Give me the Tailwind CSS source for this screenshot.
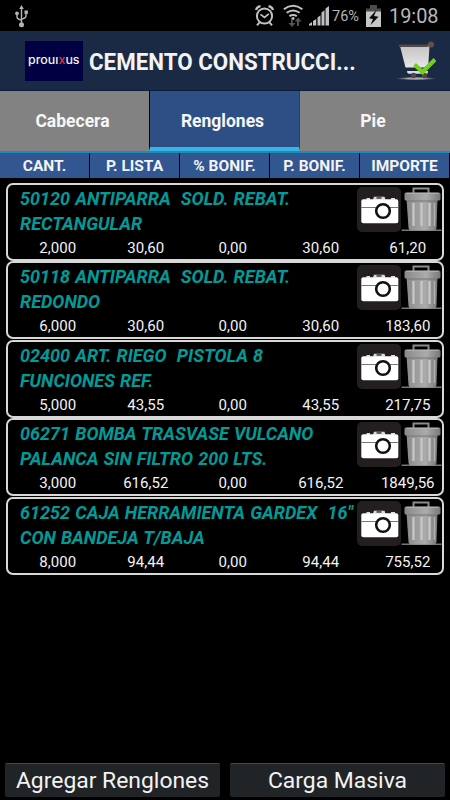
<!DOCTYPE html>
<html lang="es">
<head>
  <meta charset="UTF-8" />
  <meta name="viewport" content="width=device-width, initial-scale=1.0"/>
  <title>Prolixus - Renglones</title>
  <script src="https://cdn.jsdelivr.net/npm/@tailwindcss/browser@4"></script>
</head>
<body class="bg-black">
  <!-- shared icons -->
  <svg width="0" height="0" class="absolute">
    <defs>
      <linearGradient id="metal" x1="0" x2="1" y1="0" y2="0">
        <stop offset="0" stop-color="#898989"/><stop offset=".3" stop-color="#9b9b9b"/><stop offset=".6" stop-color="#ababab"/><stop offset="1" stop-color="#777"/>
      </linearGradient>
      <linearGradient id="cartFill" x1="0" x2="0" y1="0" y2="1">
        <stop offset="0" stop-color="#c4c4c4"/><stop offset="1" stop-color="#e6e6e6"/>
      </linearGradient>
      <linearGradient id="floor" x1="0" x2="1" y1="0" y2="0">
        <stop offset="0" stop-color="#888" stop-opacity=".2"/><stop offset=".3" stop-color="#aaa"/><stop offset=".7" stop-color="#aaa"/><stop offset="1" stop-color="#888" stop-opacity=".2"/>
      </linearGradient>
    </defs>
    <symbol id="camera" viewBox="0 0 44 45">
      <rect width="44" height="45" rx="5" fill="#231f20"/>
      <path d="M16 12.700l1-3h10.500l1 3zM9.500 11h3.500v1.700H9.500zM34 11h4v1.700h-4z" fill="#ddd"/>
      <rect x="19.500" y="10.300" width="5" height="1.300" fill="#231f20"/>
      <rect x="4.300" y="12.200" width="37" height="24" rx="2" fill="#fff"/>
      <path d="M4.300 20.500h37" stroke="#777" stroke-width="1"/>
      <circle cx="26" cy="24" r="6.800" fill="#fff" stroke="#111" stroke-width="2.600"/>
    </symbol>
    <symbol id="trash" viewBox="0 0 40 45">
      <path d="M0 42.500h40v1.500H0z" fill="#777"/>
      <path d="M12 6V1.500h15V6" fill="none" stroke="#8c8c8c" stroke-width="2"/>
      <path d="M5 12h31l-1 29q-.3 2.500-3 2.500H10q-2.700 0-3-2.500z" fill="url(#metal)"/>
      <path d="M12 16v23M20 16v23M28 16v23" stroke="#c9c9c9" stroke-width="2.200"/>
      <path d="M33 16v23" stroke="#b0b0b0" stroke-width="1.500"/>
      <rect x="3" y="5.500" width="36" height="8" rx="1.500" fill="url(#metal)"/>
      <path d="M5 6.300h32" stroke="#b5b5b5" stroke-width="1"/>
      <path d="M6 14h30" stroke="#777" stroke-width="1"/>
    </symbol>
  </svg>

  <div class="w-[450px] h-[800px] flex flex-col bg-black font-['Roboto',sans-serif] text-white overflow-hidden">

    <!-- status bar -->
    <div class="h-[31px] shrink-0 relative">
      <svg width="450" height="31" viewBox="0 0 450 31" fill="none">
        <g stroke="#b5b5b5" stroke-width="1.400">
          <path d="M21.500 7v17M17 14v3q0 1.500 1.500 2l3 1.300M26 13v3q0 1.500-1.500 2l-3 1.300"/>
          <path d="M21.500 5l-2.300 4h4.600z" fill="#b5b5b5" stroke="none"/>
          <circle cx="17" cy="13.300" r="1.900" fill="#b5b5b5" stroke="none"/>
          <path d="M24.500 10.500h3.400v3.400h-3.400z" fill="#b5b5b5" stroke="none"/>
          <circle cx="21.500" cy="24.700" r="2.500" fill="#b5b5b5" stroke="none"/>
        </g>
        <g stroke="#c2c2c2" stroke-width="2">
          <circle cx="264.500" cy="16" r="7.600"/>
          <path d="M259.500 22.300l-2.500 3M269.500 22.300l2.500 3" />
          <path d="M256 10q1-3.300 4.500-3.800M273 10q-1-3.300-4.500-3.800" stroke-width="2.200"/>
          <path d="M260.500 14.300l4 3.200 4.300-3.700" stroke-width="1.700"/>
        </g>
        <g stroke="#c2c2c2" stroke-width="2">
          <path d="M283.800 9.200q9.200-6.800 18.600 0M286.600 12.800q6.500-4.600 13 0M289.400 16.200q3.700-2.500 7.400 0"/>
          <circle cx="293" cy="18.600" r="1.500" fill="#c2c2c2" stroke="none"/>
        </g>
        <path d="M291 19v4h-2.500l3.600 4 3.400-4h-2.700v-4zM297 26v-4.500h-2.300l3.400-4 3.500 4h-2.700V26z" fill="#555"/>
        <path d="M309 25.500v-1.500l3-2v3.500zM313 25.500V21l3.200-2v6.500zM317.500 25.500v-8l3-2.300v10.300zM321.500 25.500V12.500l3-2.300v15.300zM325.500 25.500V8.500L329 6v19.500z" fill="#c0c0c0"/>
        <path d="M370 5h7v3.500h4v4h-15v-4h4z" fill="#4b4b4b"/>
        <path d="M366 11.500h15V27h-15z" fill="#c6c6c6"/>
        <path d="M376.500 10l-7.500 8.200 4 .8-2.500 6 8-8.200-4.500-.9z" fill="#080808"/>
      </svg>
      <span class="absolute left-[332px] top-[8px] text-[14.500px] leading-[18px] text-[#b4b4b4]">76%</span>
      <span class="absolute left-[389px] top-[4px] text-[20.500px] leading-[24px] text-[#b9b9b9] origin-left scale-x-[0.97]">19:08</span>
    </div>

    <!-- action bar -->
    <div class="h-[60px] shrink-0 flex items-center bg-[#1a2944] border-b border-[#0b1c3a] pl-[25px] pr-[14px]">
      <div class="w-[58px] h-[40px] bg-[#000042] flex items-center justify-center shrink-0">
        <span class="font-['Inter',sans-serif] font-medium text-[11.500px] leading-none text-gray-100 whitespace-nowrap scale-x-[1.080]">prouı<span class="text-red-500">x</span>us</span>
      </div>
      <h1 class="ml-[6px] pt-[2px] text-[24px] font-bold whitespace-nowrap flex-1 text-[#f3f3f3]"><span class="inline-block origin-left scale-x-[0.93]">CEMENTO CONSTRUCCI...</span></h1>
      <svg width="40" height="40" viewBox="0 0 40 40">
        <ellipse cx="20" cy="37.500" rx="19" ry="1.200" fill="url(#floor)"/>
        <path d="M4 5h29.500l-1.300 21.500H9.500z" fill="url(#cartFill)"/>
        <path d="M11 30h21l-.500 2.800H13q-2 0-2-2.800z" fill="#dcdcdc"/>
        <path d="M3 4.700h28l3-1.500" stroke="#544947" stroke-width="2.500" fill="none"/>
        <circle cx="35" cy="3.500" r="3" fill="#62524e"/>
        <circle cx="17.500" cy="34.500" r="2.700" fill="#554642"/><circle cx="28.500" cy="34.500" r="2.700" fill="#554642"/>
        <path d="M18.500 23.500l8 7.500 12.500-12.500" stroke="#72cf22" stroke-width="4.200" fill="none"/>
      </svg>
    </div>

    <!-- tabs -->
    <div class="h-[62px] shrink-0 flex text-[17.500px] font-bold text-center text-[#f7f7f7] border-b-2 border-[#2489b9]">
      <div class="w-[149px] bg-[#828282] leading-[60px] pr-1">Cabecera</div>
      <div class="w-[151px] bg-[#2d4f86] leading-[60px] border-l border-r border-l-black border-r-[#26406b] border-b-4 border-b-[#33b5e5] pr-1">Renglones</div>
      <div class="flex-1 bg-[#828282] leading-[60px] pr-1">Pie</div>
    </div>

    <!-- column headings -->
    <div class="h-[25px] shrink-0 flex gap-px pr-px text-[15.500px] leading-[26px] font-bold text-center text-[#f3f3f3]">
      <div class="flex-1 bg-[#32568f]">CANT.</div>
      <div class="flex-1 bg-[#32568f]">P. LISTA</div>
      <div class="flex-1 bg-[#32568f]">% BONIF.</div>
      <div class="flex-1 bg-[#32568f]">P. BONIF.</div>
      <div class="flex-1 bg-[#32568f]">IMPORTE</div>
    </div>

    <div id="lista" class="flex-1 pt-[5px] pl-[6px] pr-[6px]"></div>

    <!-- bottom buttons -->
    <div class="h-[37px] shrink-0 flex gap-[10px] px-[5px] pb-[3px] text-[22.900px] text-[#f3f3f3]">
      <button class="flex-1 bg-[#202427] border-t border-[#44484a] rounded-xs whitespace-nowrap">Agregar Renglones</button>
      <button class="flex-1 bg-[#202427] border-t border-[#44484a] rounded-xs whitespace-nowrap">Carga Masiva</button>
    </div>
  </div>

  <script>
    const renglones = [
      ["50120 ANTIPARRA  SOLD. REBAT.", "RECTANGULAR", "2,000", "30,60", "0,00", "30,60", "61,20"],
      ["50118 ANTIPARRA  SOLD. REBAT.", "REDONDO", "6,000", "30,60", "0,00", "30,60", "183,60"],
      ["02400 ART. RIEGO  PISTOLA 8", "FUNCIONES REF.", "5,000", "43,55", "0,00", "43,55", "217,75"],
      ["06271 BOMBA TRASVASE VULCANO", "PALANCA SIN FILTRO 200 LTS.", "3,000", "616,52", "0,00", "616,52", "1849,56"],
      ["61252 CAJA HERRAMIENTA GARDEX  16\"", "CON BANDEJA T/BAJA", "8,000", "94,44", "0,00", "94,44", "755,52"],
    ];

    document.getElementById("lista").innerHTML = renglones.map(([l1, l2, ...valores]) => `
      <div class="h-[78.400px]">
        <div class="h-[78px] w-[438px] border-2 border-[#d8d8d8] rounded-[7px] flex flex-col">
          <div class="h-[52px] flex pt-px">
            <div class="w-[349px] shrink-0 pl-[12px] text-[19px] leading-[25px] font-bold italic text-[#009b98] whitespace-pre"><span class="inline-block origin-left scale-x-[0.948] [word-spacing:0.700px]">${l1}<br>${l2}</span></div>
            <svg class="shrink-0 mt-px" width="44" height="45"><use href="#camera"/></svg>
            <svg class="shrink-0 mt-px" width="41" height="45"><use href="#trash"/></svg>
          </div>
          <div class="flex pl-[6px] text-[15.500px] leading-[22px] text-[#f3f3f3]">
            ${valores.map(v => `<span class="w-[87.500px] shrink-0 text-center scale-x-[0.97]">${v}</span>`).join("")}
          </div>
        </div>
      </div>`).join("");
  </script>
</body>
</html>
